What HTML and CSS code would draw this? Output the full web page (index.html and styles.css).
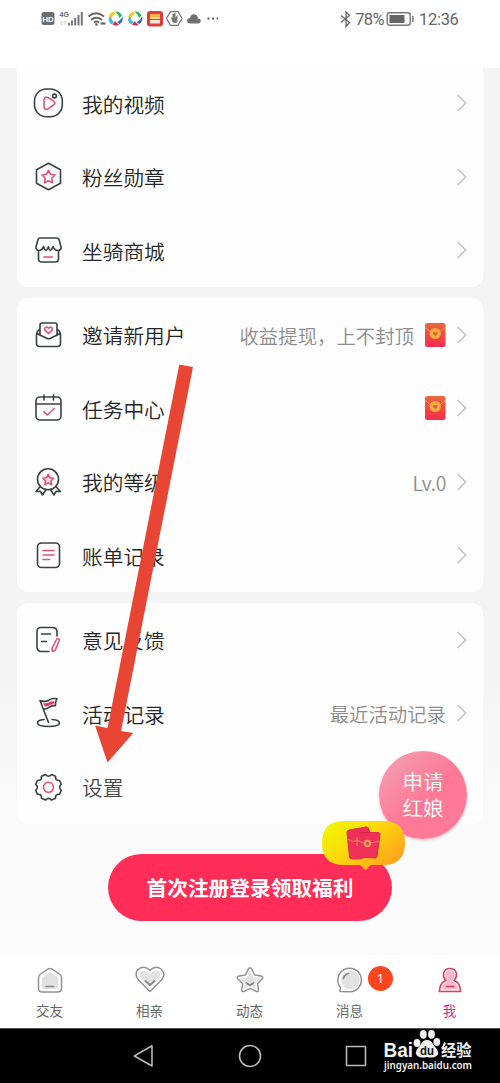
FILE: index.html
```html
<!DOCTYPE html>
<html lang="zh-CN">
<head>
<meta charset="utf-8">
<title>我</title>
<link rel="stylesheet" href="styles.css">
</head>
<body>
<svg class="defs" width="0" height="0" aria-hidden="true">
  <defs>
    <linearGradient id="packet-fill" x1="0" y1="0" x2="0" y2="1"><stop offset="0" stop-color="#e9683f"/><stop offset=".55" stop-color="#f1493f"/><stop offset="1" stop-color="#f62c55"/></linearGradient>
    <symbol id="chevron" viewBox="0 0 12 20"><path d="M1.7 2 L9.7 10 L1.7 18" fill="none" stroke="#c4c4c4" stroke-width="1.6"/></symbol>
    <symbol id="packet" viewBox="0 0 22 26">
      <rect x="1" y="1" width="20.5" height="24" rx="2.5" fill="url(#packet-fill)"/>
      <path d="M1.5 5.5 Q11 17 21 5.5" fill="none" stroke="#f79b68" stroke-width="1"/>
      <circle cx="11.2" cy="11.5" r="5.6" fill="#fba944"/>
      <path d="M11.2 14.3 L8.9 11.6 Q8.7 9.2 11.2 10.3 Q13.8 9.2 13.5 11.6Z" fill="#d9652e"/>
    </symbol>
    <symbol id="pinwheel" viewBox="0 0 16 16">
      <path d="M1 7.500A7 7 0 0 1 6.500 1.200L8.500 3.500Q4 4.500 3.800 9.500Z" fill="#f3cb28"/>
      <path d="M7.500 1A7 7 0 0 1 14.500 5L12 7.500Q11 4 7.500 1Z" fill="#35b45c"/>
      <path d="M15 6A7 7 0 0 1 12 13.700L9.800 11.500Q13.500 9.500 15 6Z" fill="#3469c8"/>
      <path d="M11.500 14.200A7 7 0 0 1 5 14.300L7.500 10.800Z" fill="#d9274b"/>
      <path d="M4.500 14A7 7 0 0 1 1 8.500L3.500 6.500Q4 10.500 6.500 11.500Z" fill="#39b9dd"/>
    </symbol>
  </defs>
</svg>
<div class="screen">
  <header class="status">
    <svg class="status-icons" width="182" height="20" viewBox="0 0 182 20">
      <rect x="1.500" y="3" width="13" height="13" rx="2.500" fill="#6d6d6d"/>
      <text x="8" y="12.500" class="hd">HD</text>
      <text x="19.500" y="8" class="gen">4G</text>
      <path d="M22 12v4m-1.500-1.500 1.500 1.500M25 16v-4m1.500 1.500L25 12" stroke="#bbb" fill="none" stroke-width=".8"/>
      <path d="M29 14v2.500M32 11.500v5M35.200 9v7.500M38.500 6v10.500M41.800 3v13.500" stroke="#777" stroke-width="2"/>
      <g fill="none" stroke="#666" stroke-width="1.700"><path d="M48.500 7.500Q56 1 64 7.500M51 11Q56.500 6.500 62 11M54 13.500Q56.500 11.500 59 13.500"/><path d="M60.500 14.500h5" stroke-width="2.200"/></g>
      <circle cx="56.500" cy="15.500" r="1.300" fill="#666"/>
      <use href="#pinwheel" x="67.500" y="1.500" width="16" height="16"/>
      <use href="#pinwheel" x="87" y="1.500" width="16" height="16"/>
      <rect x="107" y="2" width="16" height="15.500" rx="3" fill="#de3e37"/><path d="M110 5h10v3h-10z" fill="#f6b14b"/><path d="M110 8h10v2h-10z" fill="#f7d87f"/><path d="M110 11h10v3.500h-10z" fill="#f5e5dc"/>
      <path d="M130.500 2.700h7.500l4 6.800-4 6.800h-7.500l-4-6.800z" fill="none" stroke="#777" stroke-width="1.200"/>
      <path d="M131 8l1.500 1V5h1.500v4V4h1.500v5l2-4v6.500q0 2.500-2.500 2.500t-3-2z" fill="#777"/>
      <path d="M150.500 14.500q-3.500 0-3.500-2.700 0-2.300 3-2.800 1-4.500 5-3.500 3 .8 2.800 4 3 .3 3 2.500t-2.500 2.500z" fill="#707070"/>
      <path d="M167.500 9.500h2M172 9.500h2M176.500 9.500h1.600" stroke="#666" stroke-width="1.800"/>
    </svg>
    <div class="status-right">
      <svg width="12" height="18" viewBox="0 0 12 18"><path d="M1 5.500l8.500 7L6 16.500V2L9.500 5.500 1 12.500" fill="none" stroke="#666" stroke-width="1.300"/></svg>
      <span class="percent">78%</span>
      <svg width="30" height="18" viewBox="0 0 30 18"><rect x="1.200" y="2.700" width="23" height="12.500" rx="2.500" fill="none" stroke="#777" stroke-width="1.400"/><rect x="3.500" y="5" width="15" height="8" fill="#666"/><path d="M26.800 6v6" stroke="#777" stroke-width="1.500"/></svg>
      <span class="time">12:36</span>
    </div>
  </header>

  <main class="content">
    <section class="card card-first">
      <div class="row">
        <svg class="icon" viewBox="0 0 32 32"><rect x="2.500" y="2" width="27.800" height="27.800" rx="12" class="ink"/><path class="pink" d="M12 12.500q1-3.500 4.500-1.700l4.800 3q3 2 .2 4.200l-5 3.700q-4.200 2-4.500-2z"/><circle cx="22.500" cy="9" r="1.900" class="ink"/></svg>
        <span class="label">我的视频</span><svg class="chev"><use href="#chevron"/></svg>
      </div>
      <div class="row">
        <svg class="icon" viewBox="0 0 32 32"><path class="ink" d="M16.500 2.200 28.500 8.800V22.200L16.500 28.800 4.500 22.200V8.800z"/><path class="pink" d="M16.500 9.300l2 4 4.500.7-3.200 3.300.7 4.500-4-2.100-4 2.100.7-4.500-3.200-3.300 4.500-.7z"/></svg>
        <span class="label">粉丝勋章</span><svg class="chev"><use href="#chevron"/></svg>
      </div>
      <div class="row">
        <svg class="icon" viewBox="0 0 32 32"><path class="ink" d="M8 4h17q1.500 0 2 1.500l2 7.500q.3 3.200-2.500 3.500-4 .2-5.500-4-1.500 3.800-2.700 3.800T16.500 12.500q-1.300 3.800-2.500 3.800T11.500 12.500q-1.500 4.200-5 4-2.800-.5-2.500-3.500l2-7.500Q6.500 4 8 4zM6.500 17v8q0 3 3 3h14q3 0 3-3v-8"/><path class="pink" d="M12 23h8.500"/></svg>
        <span class="label">坐骑商城</span><svg class="chev"><use href="#chevron"/></svg>
      </div>
    </section>

    <section class="card">
      <div class="row">
        <svg class="icon" viewBox="0 0 32 32"><path class="ink" d="M8 16.500V6q0-2 2-2h13q2 0 2 2v10.500M7.500 10.500Q4.500 12.500 4.500 15v9.500q0 3 3 3h18q3 0 3-3V15q0-2.500-3-4.500M5 14.500l9.500 4.700q2 1 4 0l9.500-4.700"/><path class="pink" d="M16.500 14.500l-3.500-3.200Q12 9 14 8.200q1.700-.3 2.500 1.200 1-1.500 2.700-1.200Q21 9 20 11.300z"/></svg>
        <span class="label">邀请新用户</span><span class="note">收益提现，上不封顶</span><svg class="packet"><use href="#packet"/></svg><svg class="chev"><use href="#chevron"/></svg>
      </div>
      <div class="row">
        <svg class="icon" viewBox="0 0 32 32"><rect x="4" y="5" width="25" height="23" rx="4" class="ink"/><path class="ink" d="M4 12h25M12 3v5M21.500 3v5"/><path class="pink" d="M11.800 19.500l3.500 3.500 7-6.500"/></svg>
        <span class="label">任务中心</span><span class="note"></span><svg class="packet"><use href="#packet"/></svg><svg class="chev"><use href="#chevron"/></svg>
      </div>
      <div class="row">
        <svg class="icon" viewBox="0 0 32 32"><circle cx="16" cy="13.300" r="10.500" class="ink"/><path class="ink" d="M8.300 20.500L4 25.500l4.500-.2 2 3.700 3.600-5.500M23.700 20.500l4.800 5-4.500-.2-2 3.700-3.600-5.500"/><path class="pink blush" d="M16.200 8.300l1.700 3.500 3.700.5-2.700 2.700.7 3.700-3.400-1.800-3.400 1.800.7-3.700-2.700-2.700 3.700-.5z"/></svg>
        <span class="label">我的等级</span><span class="note level">Lv.0</span><svg class="chev"><use href="#chevron"/></svg>
      </div>
      <div class="row">
        <svg class="icon" viewBox="0 0 32 32"><rect x="5.500" y="4" width="22" height="24.500" rx="4" class="ink"/><path class="pink" d="M11 11.500h11M11 16h11M11 20.500h6.500"/></svg>
        <span class="label">账单记录</span><svg class="chev"><use href="#chevron"/></svg>
      </div>
    </section>

    <section class="card">
      <div class="row">
        <svg class="icon" viewBox="0 0 32 32"><path class="ink" d="M25 12V8q0-4.500-4.500-4.500H9Q5 3.500 5 7.500V23q0 4.500 4.500 4.500h7.500M9.500 10h9M9.500 17.500h5"/><path class="pink" d="M24.500 15.500q.5-1.300 1.800-.8 1.500.5 1 1.800l-4 9.500-2.800 1.500-.6-3z"/></svg>
        <span class="label">意见反馈</span><svg class="chev"><use href="#chevron"/></svg>
      </div>
      <div class="row">
        <svg class="icon" viewBox="0 0 32 32"><path class="ink" d="M8 3.500l8.500 22M8 3.500q5 2 9-.5 3-2 8-1.300-2 3.500-1.500 7-4-.5-7 2-2.500 1.800-5 1M12 22.500q-7 .7-6.500 3.800 1 3.200 11 3.200t11-3.200q0-3.500-7.500-3.800"/><path d="M11 6q4 1 7-1.200l4.500-.8-1 3.200q-4 0-6 2.300l-3-.5z" fill="#ed3763"/></svg>
        <span class="label">活动记录</span><span class="note">最近活动记录</span><svg class="chev"><use href="#chevron"/></svg>
      </div>
      <div class="row row-pressed">
        <svg class="icon" viewBox="0 0 32 32"><path class="ink" d="M13.500 3.500q3 3.500 6 0l4 1.700q-.4 4.500 4 4.300l1.800 3.800q-3.500 3 0 6l-1.800 4q-4.400-.3-4 4l-4 1.800q-3-3.500-6 0l-4-1.800q.4-4.300-4-4l-1.800-4q3.500-3 0-6l1.800-3.800q4.400.2 4-4.300z"/><circle cx="16.500" cy="16.300" r="5" class="pink"/></svg>
        <span class="label">设置</span>
      </div>
    </section>

    <div class="signup">
      <div class="signup-button">首次注册登录领取福利</div>
      <svg class="gift" width="86" height="54" viewBox="0 0 86 54">
        <defs><linearGradient id="bubble" x1="0" y1="0" x2="1" y2=".7"><stop offset="0" stop-color="#ecfa00"/><stop offset=".45" stop-color="#fbdc0c"/><stop offset="1" stop-color="#ffa31c"/></linearGradient></defs>
        <path d="M23 1h39q22 0 22 22 0 22-22 22H50q-2 1-4 4-1.500 1.500-3 0-2-3-4-4H23Q1 45 1 23 1 1 23 1z" fill="url(#bubble)"/>
        <path d="M28 10l17-3q2-.4 2.500 1.500l1.500 4h8q2 0 2 2l-3 22q-.5 2-3 1.500-7-2-15 1l-7 0q-2-.2-2.500-2L26 12q0-1.700 2-2z" fill="#ef3157" stroke="#d92f4b"/>
        <path d="M38 13l11-.500" fill="none" stroke="#d82444"/>
        <path d="M27 19q5 4 9 1l6 3q3 0 6 0t10-2M36 17v9" fill="none" stroke="#f68d69" stroke-width=".9"/>
        <circle cx="46.500" cy="23.500" r="3.700" fill="#f99a60"/><circle cx="46.500" cy="23.500" r="1.700" fill="#df4750"/>
      </svg>
    </div>
  </main>

  <nav class="tabs">
    <div class="tab"><svg viewBox="0 0 32 32"><path class="tab-line" d="M14 5q2-1 4 0l8 5.500q1.500 1 1.500 3V24q0 4-4 4h-15q-4 0-4-4V13.500q0-2 1.500-3z"/><path class="tab-fill" d="M16 8l8 5.500V24q0 1-1 1H9q-1 0-1-1V13.500z"/><path class="tab-mark" d="M12 22.500h7.500"/></svg><span>交友</span></div>
    <div class="tab"><svg viewBox="0 0 32 32"><path class="tab-line" d="M16 27.500L4.500 16Q-.5 9.500 4.500 5q6-4 11.500 1.500Q21.500 1 27 5q5.500 4.500.5 11z"/><path class="tab-fill" d="M16 23.500L7 14.500q-3-4 0-7 5-2.500 9 2.800 4-5.300 9-2.800 3 3 0 7z"/><path class="tab-mark" d="M11.500 17l4.500 4 4.500-4"/></svg><span>相亲</span></div>
    <div class="tab"><svg viewBox="0 0 32 32"><path class="tab-line" d="M14.300 5q1.700-2.500 3.400 0l3 6 6.300 1q2.800.8 1 3l-4.500 4.700 1 6q0 2.500-2.500 1.700l-6-3-6 3q-2.500.8-2.300-1.700l1-6L4 15q-1.800-2.200 1-3l6.300-1z"/><path class="tab-fill" d="M16 7l3.300 6.500 7 1-5 4.500 1 6-6.300-3.300L9.700 25l1-6-5-4.500 7-1z"/><path class="tab-mark" d="M12.500 19l3.500 2.500 3.500-2.500"/></svg><span>动态</span></div>
    <div class="tab"><svg viewBox="0 0 32 32"><path class="tab-line" d="M6.500 27.500q-1 0-.5-1.500l.5-2.500A11.800 11.800 0 1 1 16 27.800z"/><circle cx="16.500" cy="16" r="9.300" class="tab-fill"/><path class="tab-mark" d="M9.500 14.500q1-4 5-5"/></svg><span>消息</span><b class="badge">1</b></div>
    <div class="tab tab-active"><svg viewBox="0 0 32 32"><path class="tab-line" d="M12 16.500Q9 13.500 9.500 9.500q1-5 6.500-5t6.500 5q.5 4-2.500 7 5 1.500 6 7l.7 4H5.300l.7-4q1-5.500 6-7z"/><path class="tab-fill" d="M14 17q-3-3-2.500-7 1-3.500 4.500-3.500t4.500 3.500q.5 4-2.500 7 5 2 6 8H8q1-6 6-8z"/><path class="tab-mark" d="M12.500 22.500h7"/></svg><span>我</span></div>
  </nav>

  <footer class="system">
    <svg viewBox="0 0 24 24"><path d="M20 1.800V22L2.300 12z"/></svg>
    <svg viewBox="0 0 24 24"><circle cx="12" cy="12" r="10.500"/></svg>
    <svg viewBox="0 0 24 24"><rect x="2.500" y="2.500" width="19" height="19"/></svg>
  </footer>

  <div class="float-button"><span>申请<br>红娘</span></div>

  <svg class="arrow" width="500" height="1083" viewBox="0 0 500 1083"><path d="M179.300 364.500L193 367 121 731 133.300 733 107.500 762.500 95 725.500 107.500 728z" fill="#e84535"/></svg>

  <svg class="watermark" width="100" height="56" viewBox="0 0 100 56">
    <g fill="#f1f1f1"><ellipse cx="36" cy="16" rx="3.400" ry="4"/><ellipse cx="42.300" cy="7.300" rx="3.400" ry="4.400"/><ellipse cx="50.500" cy="7.300" rx="3.400" ry="4.400"/><ellipse cx="55.800" cy="15" rx="3.400" ry="4"/>
    <path d="M46 13q4 0 6 4 1 2 3 4 4 5 .5 8-3 2.500-9.500 1-6.500 1.500-9.500-1-3.500-3 .5-8 2-2 3-4 2-4 6-4z"/></g>
    <text x="2.500" y="29.500" class="wm-bai" textLength="29.500" lengthAdjust="spacingAndGlyphs">Bai</text>
    <text x="46" y="28" class="wm-du" textLength="14" lengthAdjust="spacingAndGlyphs">du</text>
    <text x="60" y="28.500" class="wm-cn" textLength="30.500" lengthAdjust="spacingAndGlyphs">经验</text>
    <text x="3" y="41.500" class="wm-url" textLength="88" lengthAdjust="spacingAndGlyphs">jingyan.baidu.com</text>
  </svg>
</div>
</body>
</html>
```
FILE: styles.css
```css
* { box-sizing: border-box; }
body { margin: 0; font-family: "Noto Sans CJK SC", sans-serif; }
.defs { position: absolute; }
.screen { position: relative; width: 500px; height: 1083px; overflow: hidden; display: flex; flex-direction: column; background: #fff; }

.status { height: 68px; flex: none; display: flex; justify-content: space-between; align-items: flex-start; padding: 9px 40px 0 40px; background: #fff; }
.status-right { display: flex; align-items: center; height: 20px; color: #666; font-family: Roboto, sans-serif; font-size: 16.5px; }
.percent { font-weight: 400; margin-left: 3px; margin-right: 2px; letter-spacing: -.6px; }
.time { font-weight: 400; margin-left: 3px; width: 41px; letter-spacing: -.3px; white-space: nowrap; }
.hd { font: bold 8px "Liberation Sans", sans-serif; fill: #fff; text-anchor: middle; }
.gen { font: bold 7px "Liberation Sans", sans-serif; fill: #666; }

.content { height: 887px; flex: none; padding: 0 17px; display: flex; flex-direction: column; gap: 11px; background: linear-gradient(#f4f4f4 0, #f4f4f4 68%, #fafafa 86%, #fcfcfc 100%); }
.card { flex: none; background: #fefefe; border-radius: 11px; }
.card-first { height: 219px; border-radius: 0 0 11px 11px; display: flex; flex-direction: column; justify-content: flex-end; }
.row { height: 73.5px; flex: none; display: flex; align-items: center; padding: 0 15px; }
.icon { width: 32px; height: 32px; flex: none; }
.icon * { stroke-linejoin: round; stroke-linecap: round; }
.ink { fill: none; stroke: #3b4142; stroke-width: 1.6; }
.pink { fill: none; stroke: #e2517b; stroke-width: 1.6; }
.blush { fill: #fbdde5; }
.label { margin-left: 18px; font-size: 20.7px; font-weight: 350; line-height: 30px; color: #262626; white-space: nowrap; padding-top: 1px; }
.row-pressed .label { color: #484848; }
.note { margin-left: auto; font-size: 19.4px; line-height: 30px; color: #8c8c8c; font-weight: 350; white-space: nowrap; padding-top: 2px; }
.level { letter-spacing: -.3px; }
.packet { width: 22px; height: 26px; margin-left: 10px; }
.chev { width: 12px; height: 20px; margin-left: 10px; flex: none; }
.label + .chev { margin-left: auto; }

.signup { position: relative; z-index: 1; margin: 19px 91px 0; flex: none; }
.signup-button { height: 67px; border-radius: 34px; background: #ff2d57; color: #fff; display: flex; align-items: center; justify-content: center; font-weight: 700; font-size: 20.7px; white-space: nowrap; }
.gift { position: absolute; left: 213px; top: -34px; }

.tabs { height: 73px; flex: none; display: flex; background: #fff; }
.tab { position: relative; width: 100px; display: flex; flex-direction: column; align-items: center; padding-top: 9px; padding-right: 1px; font-size: 13.5px; line-height: 20px; color: #666; }
.tab svg { width: 32px; height: 32px; }
.tab span { margin-top: 4px; }
.tab-line { fill: #fff; stroke: #929292; stroke-width: 1.5; stroke-linejoin: round; }
.tab-fill { fill: #e2e2e2; }
.tab-mark { fill: none; stroke: #888; stroke-width: 1.7; stroke-linecap: round; stroke-linejoin: round; }
.tab-active { color: #d82b91; }
.tab-active .tab-line { stroke: #cc4466; fill: #ffe4eb; }
.tab-active .tab-fill { fill: #f8b9c9; }
.tab-active .tab-mark { stroke: #d83c61; }
.badge { position: absolute; left: 68px; top: 11px; width: 25px; height: 25px; border-radius: 50%; background: #fc461d; color: #fff; font: 400 12px/25px "Noto Sans", sans-serif; text-align: center; }

.system { height: 55px; flex: none; background: #000; display: flex; justify-content: center; align-items: center; gap: 82px; border-top: 1px solid #555; }
.system svg { width: 24px; height: 24px; fill: none; stroke: #b8b8b8; stroke-width: 1.6; stroke-linejoin: round; }

.float-button { position: absolute; left: 379px; top: 751px; width: 88px; height: 88px; border-radius: 50%; background: linear-gradient(135deg, #f1a3b5, #ff7795 55%, #ff7d9b); box-shadow: 0 1px 3px #ff7d9b88; color: #fff; font-size: 20.5px; font-weight: 350; line-height: 26px; display: flex; align-items: center; justify-content: center; padding-bottom: 2px; }
.arrow { position: absolute; left: 0; top: 0; pointer-events: none; }
.watermark { position: absolute; left: 381px; top: 1027px; fill: #f1f1f1; }
.wm-bai { font: bold 20px "Liberation Sans", sans-serif; }
.wm-du { font: bold 12px "Liberation Sans", sans-serif; fill: #111; text-anchor: middle; }
.wm-cn { font: bold 15.5px "Noto Sans CJK SC", sans-serif; }
.wm-url { font: 600 10.5px "Noto Sans", sans-serif; }
```
